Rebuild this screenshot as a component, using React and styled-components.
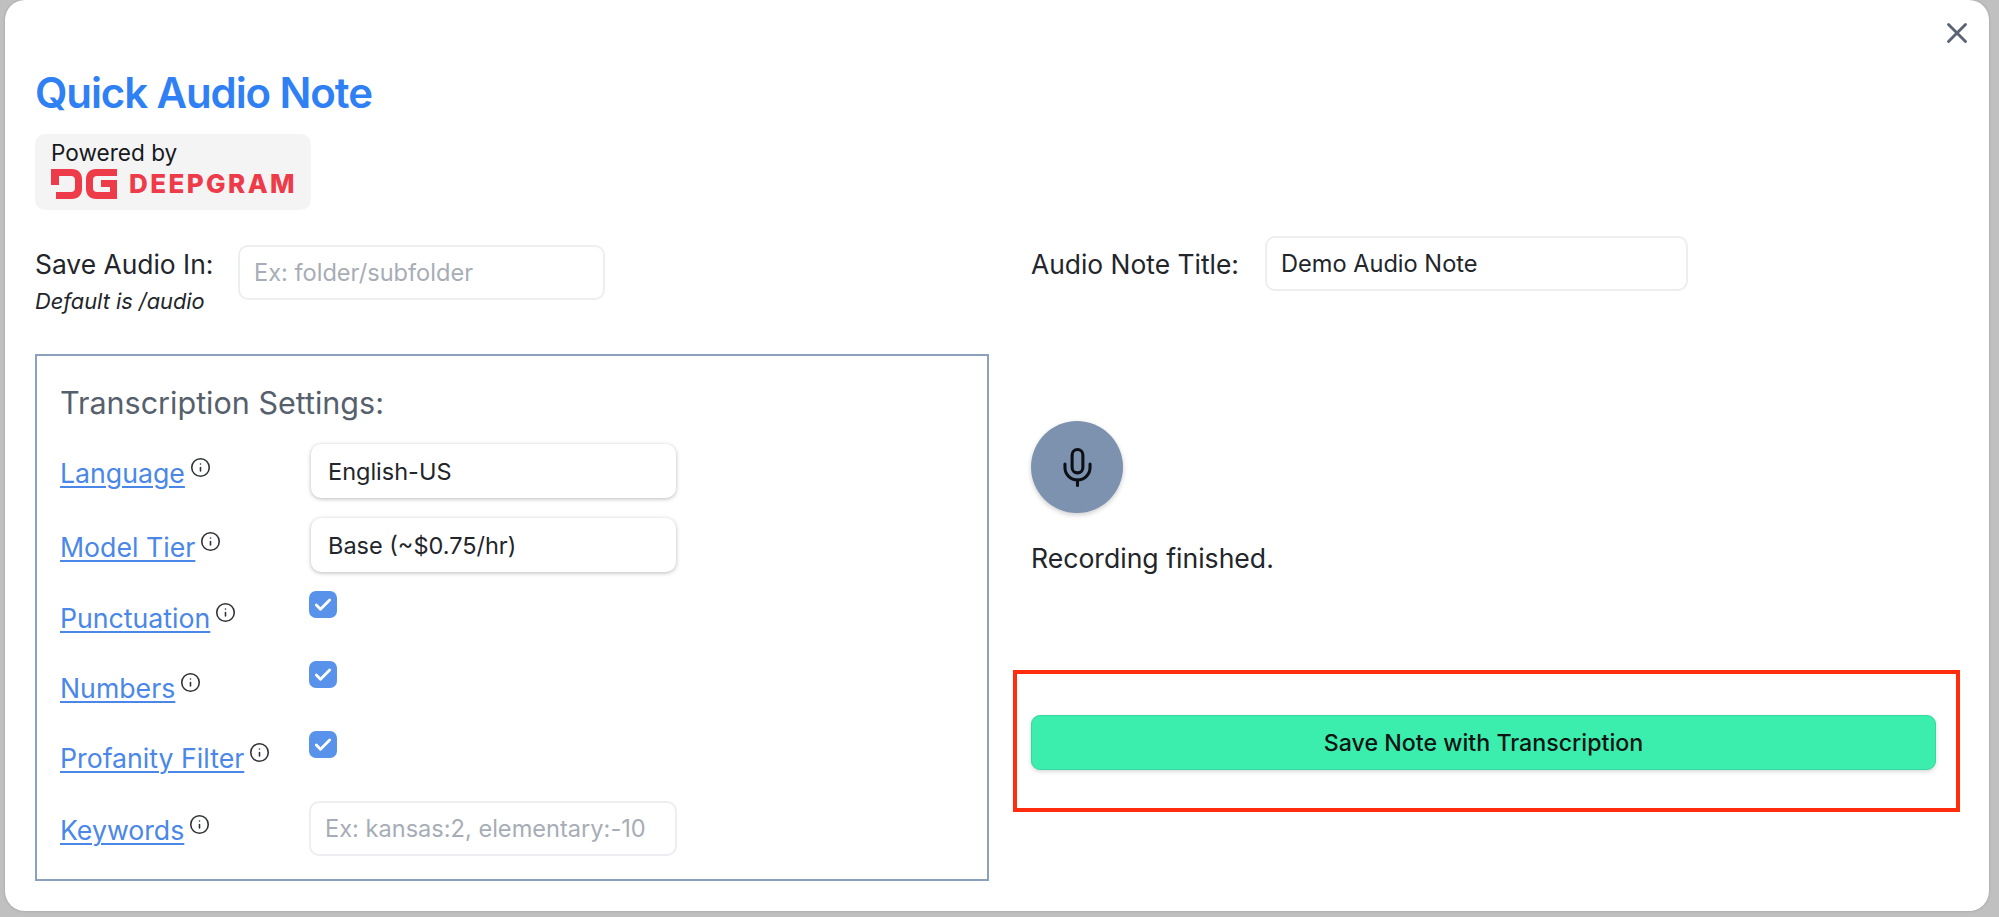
import styled, { createGlobalStyle } from "styled-components";
import { Check, Info, Mic, X } from "lucide-react";

const GlobalStyle = createGlobalStyle`
html, body {
    margin: 0;
    padding: 0;
    height: 917px;
    overflow: hidden;
    background: #c0c0c0;
    font-family: Inter, "Liberation Sans", sans-serif;
    color: #1f2226;
}
* {
    box-sizing: border-box;
}
`

const settings = [
    { label: "Language", kind: "select", value: "English-US", height: 74 },
    { label: "Model Tier", kind: "select", value: "Base (~$0.75/hr)", height: 73 },
    { label: "Punctuation", kind: "check", height: 70 },
    { label: "Numbers", kind: "check", height: 70 },
    { label: "Profanity Filter", kind: "check", height: 70 },
    { label: "Keywords", kind: "text", placeholder: "Ex: kansas:2, elementary:-10", height: 54 },
];

function DeepgramMark() {
    return (
        <MarkSvg width="66" height="30" viewBox="0 0 66 30" fill="none">
            <path d="M0 0H21C27 0 31 4 31 10V20C31 26 27 30 21 30H5V23H20C22.500 23 24 21.500 24 19V11C24 8.500 22.500 7 20 7H8V16H0Z" fill="#ee3b49" />
            <path d="M66 7H46C43.500 7 42 8.500 42 11V19C42 21.500 43.500 23 46 23H59V18H50V11H66V30H45C39 30 35 26 35 20V10C35 4 39 0 45 0H66Z" fill="#ee3b49" />
        </MarkSvg>
    );
}

function SettingRow({ item }) {
    return (
        <Row $height={item.height}>
            <LabelWrap $offset={item.kind === "check" ? 10 : 12}>
                <HelpLink href="#">{item.label}</HelpLink>
                <InfoSlot><Info size={21} strokeWidth={1.8} color="#2f3236" /></InfoSlot>
            </LabelWrap>
            {item.kind === "select" && <SelectBox>{item.value}</SelectBox>}
            {item.kind === "check" && <CheckBox><Check size={20} strokeWidth={3.4} color="#fff" /></CheckBox>}
            {item.kind === "text" && <PlainInput $width={368} placeholder={item.placeholder} />}
        </Row>
    );
}

export default function App() {
    return (
        <Modal>
            <GlobalStyle />
            <CloseButton><X size={34} strokeWidth={2} color="#596373" /></CloseButton>
            <Title>Quick Audio Note</Title>
            <PoweredBox>
                <PoweredText>Powered by</PoweredText>
                <LogoRow>
                    <DeepgramMark />
                    <LogoName>DEEPGRAM</LogoName>
                </LogoRow>
            </PoweredBox>
            <Columns>
                <LeftColumn>
                    <SaveRow>
                        <SaveLabels>
                            <FieldLabel>Save Audio In:</FieldLabel>
                            <DefaultHint>Default is /audio</DefaultHint>
                        </SaveLabels>
                        <PlainInput $width={367} placeholder="Ex: folder/subfolder" />
                    </SaveRow>
                    <SettingsBox>
                        <SettingsTitle>Transcription Settings:</SettingsTitle>
                        {settings.map((item) => (
                            <SettingRow key={item.label} item={item} />
                        ))}
                    </SettingsBox>
                </LeftColumn>
                <RightColumn>
                    <TitleRow>
                        <FieldLabel>Audio Note Title:</FieldLabel>
                        <PlainInput $width={423} defaultValue="Demo Audio Note" />
                    </TitleRow>
                    <MicButton><Mic size={43} strokeWidth={1.7} color="#0c0f14" /></MicButton>
                    <StatusText>Recording finished.</StatusText>
                    <Highlight>
                        <SaveButton>Save Note with Transcription</SaveButton>
                    </Highlight>
                </RightColumn>
            </Columns>
        </Modal>
    );
}

const Modal = styled.div`
position: relative;
width: 1984px;
height: 911px;
margin-left: 5px;
padding: 68px 53px 0px 30px;
background: #ffffff;
border-radius: 20px;
box-shadow: 0 0 3px rgba(0, 0, 0, 0.18);
`

const CloseButton = styled.div`
position: absolute;
top: 16px;
right: 15px;
display: flex;
`

const Title = styled.h1`
margin: 0;
font-size: 42px;
line-height: 50px;
font-weight: 600;
letter-spacing: -1.1px;
color: #3080f5;
`

const PoweredBox = styled.div`
width: 276px;
height: 76px;
margin-top: 16px;
padding: 5px 16px;
background: #f4f4f5;
border-radius: 10px;
`

const PoweredText = styled.div`
font-size: 22.6px;
line-height: 27px;
font-weight: 400;
color: #17191c;
`

const LogoRow = styled.div`
display: flex;
align-items: center;
gap: 12px;
margin-top: 3px;
`

const MarkSvg = styled.svg`
flex-shrink: 0;
`

const LogoName = styled.span`
font-size: 26px;
line-height: 30px;
font-weight: 800;
letter-spacing: 2.4px;
white-space: nowrap;
color: #ee3b49;
`

const Columns = styled.div`
display: grid;
grid-template-columns: 954px 905px;
column-gap: 42px;
margin-top: 26px;
`

const LeftColumn = styled.div`
display: flex;
flex-direction: column;
padding-top: 9px;
`

const SaveRow = styled.div`
display: flex;
align-items: flex-start;
gap: 26px;
height: 109px;
`

const SaveLabels = styled.div`
display: flex;
flex-direction: column;
gap: 8px;
width: 177px;
margin-top: 2px;
`

const FieldLabel = styled.span`
font-size: 26.4px;
line-height: 34px;
white-space: nowrap;
color: #22252a;
`

const DefaultHint = styled.span`
font-size: 21.8px;
line-height: 24px;
font-style: italic;
white-space: nowrap;
color: #22252a;
`

const PlainInput = styled.input`
width: ${(props) => props.$width}px;
height: 55px;
padding: 0px 14px;
background: #ffffff;
border: 2px solid #eceef1;
border-radius: 10px;
outline: none;
font-family: Inter, "Liberation Sans", sans-serif;
font-size: 23.6px;
color: #22252a;
&::placeholder {
    color: #a7adb6;
    opacity: 1;
}
`

const SettingsBox = styled.div`
width: 954px;
height: 527px;
padding: 26px 23px 0px 23px;
border: 2px solid #8aa0bd;
`

const SettingsTitle = styled.div`
height: 62px;
font-size: 30.5px;
line-height: 42px;
color: #56606d;
`

const Row = styled.div`
display: flex;
align-items: flex-start;
height: ${(props) => props.$height}px;
`

const LabelWrap = styled.div`
display: flex;
align-items: flex-start;
width: 249px;
margin-top: ${(props) => props.$offset}px;
`

const HelpLink = styled.a`
font-size: 26.7px;
line-height: 34px;
color: #4a87e8;
text-decoration: underline;
text-decoration-thickness: 2px;
text-underline-offset: 3px;
`

const InfoSlot = styled.span`
display: flex;
margin: 1px 0px 0px 5px;
`

const SelectBox = styled.div`
display: flex;
align-items: center;
width: 365px;
height: 54px;
margin-left: 2px;
padding: 0px 17px;
background: #ffffff;
border-radius: 10px;
box-shadow: 0 1px 4px rgba(0, 0, 0, 0.28);
font-size: 23.5px;
color: #22252a;
`

const CheckBox = styled.div`
display: flex;
align-items: center;
justify-content: center;
width: 28px;
height: 27px;
background: #5892ea;
border-radius: 7px;
`

const RightColumn = styled.div`
display: flex;
flex-direction: column;
`

const TitleRow = styled.div`
display: flex;
align-items: center;
gap: 26px;
`

const MicButton = styled.div`
display: flex;
align-items: center;
justify-content: center;
width: 92px;
height: 92px;
margin-top: 130px;
background: #7c92ae;
border-radius: 50%;
box-shadow: 0 2px 5px rgba(0, 0, 0, 0.2);
`

const StatusText = styled.div`
margin-top: 28px;
font-size: 26.6px;
line-height: 34px;
color: #22252a;
`

const Highlight = styled.div`
display: flex;
align-items: center;
height: 142px;
margin: 95px -24px 0px -18px;
padding: 2px 20px 0px 14px;
border: 4px solid #ff2c0d;
`

const SaveButton = styled.div`
display: flex;
align-items: center;
justify-content: center;
width: 905px;
height: 55px;
padding-top: 2px;
background: #3ceeae;
border: 1px solid #35d8a0;
border-radius: 9px;
box-shadow: 0 2px 4px rgba(0, 0, 0, 0.15);
font-size: 23.2px;
font-weight: 500;
color: #0c1512;
`
